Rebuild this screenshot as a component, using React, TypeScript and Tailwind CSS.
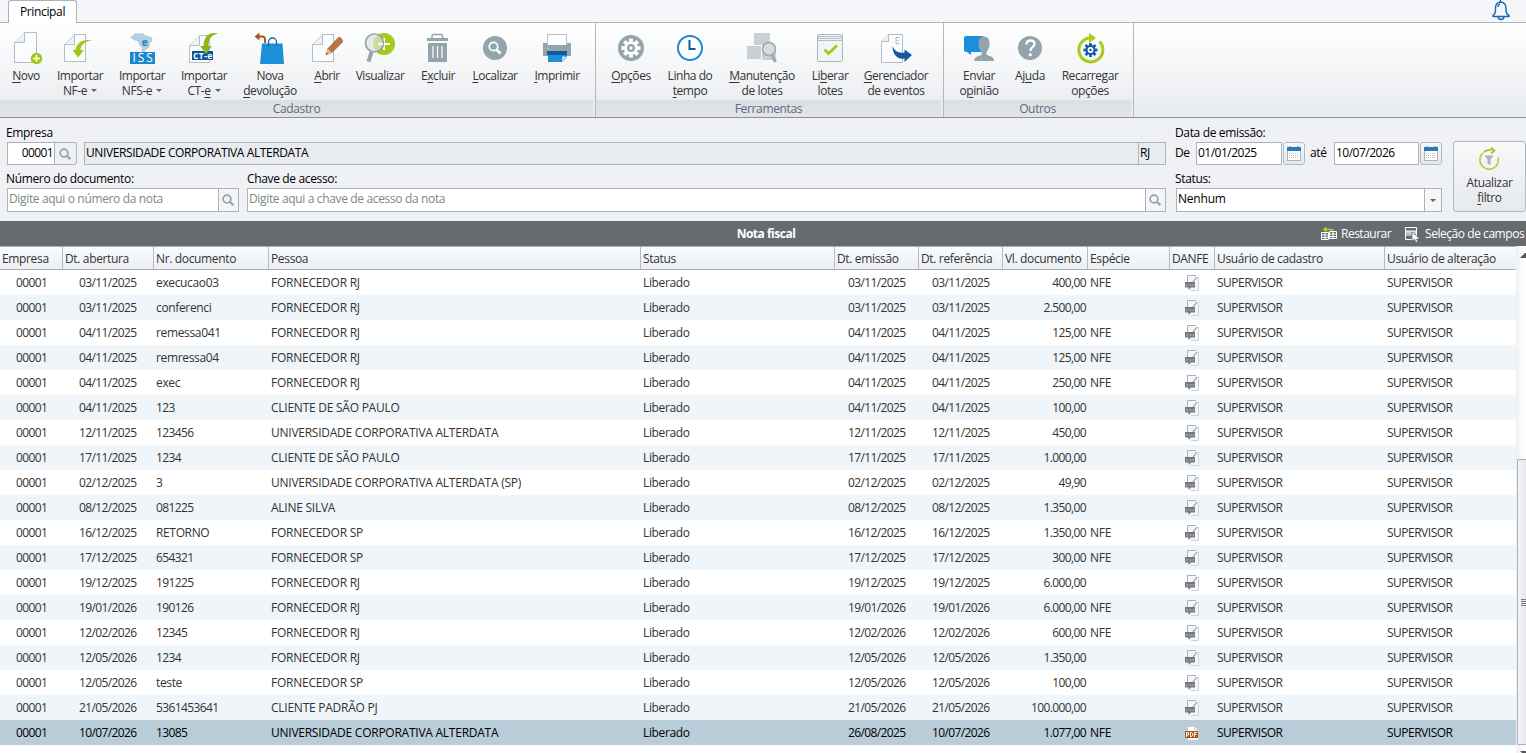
import React from 'react';

interface RibbonButtonProps {
  label: React.ReactNode;
  second?: React.ReactNode;
  menu?: boolean;
  width: string;
  viewBox: string;
  children: React.ReactNode;
}

interface Nota {
  abertura: string;
  numero: string;
  pessoa: string;
  emissao: string;
  referencia: string;
  valor: string;
  especie?: string;
}

const nota = (
  abertura: string,
  numero: string,
  pessoa: string,
  valor: string,
  especie?: string,
  emissao: string = abertura,
): Nota => ({ abertura, numero, pessoa, valor, especie, emissao, referencia: abertura });

const NOTAS: Nota[] = [
  nota('03/11/2025', 'execucao03', 'FORNECEDOR RJ', '400,00', 'NFE'),
  nota('03/11/2025', 'conferenci', 'FORNECEDOR RJ', '2.500,00'),
  nota('04/11/2025', 'remessa041', 'FORNECEDOR RJ', '125,00', 'NFE'),
  nota('04/11/2025', 'remressa04', 'FORNECEDOR RJ', '125,00', 'NFE'),
  nota('04/11/2025', 'exec', 'FORNECEDOR RJ', '250,00', 'NFE'),
  nota('04/11/2025', '123', 'CLIENTE DE SÃO PAULO', '100,00'),
  nota('12/11/2025', '123456', 'UNIVERSIDADE CORPORATIVA ALTERDATA', '450,00'),
  nota('17/11/2025', '1234', 'CLIENTE DE SÃO PAULO', '1.000,00'),
  nota('02/12/2025', '3', 'UNIVERSIDADE CORPORATIVA ALTERDATA (SP)', '49,90'),
  nota('08/12/2025', '081225', 'ALINE SILVA', '1.350,00'),
  nota('16/12/2025', 'RETORNO', 'FORNECEDOR SP', '1.350,00', 'NFE'),
  nota('17/12/2025', '654321', 'FORNECEDOR SP', '300,00', 'NFE'),
  nota('19/12/2025', '191225', 'FORNECEDOR RJ', '6.000,00'),
  nota('19/01/2026', '190126', 'FORNECEDOR RJ', '6.000,00', 'NFE'),
  nota('12/02/2026', '12345', 'FORNECEDOR RJ', '600,00', 'NFE'),
  nota('12/05/2026', '1234', 'FORNECEDOR RJ', '1.350,00'),
  nota('12/05/2026', 'teste', 'FORNECEDOR SP', '100,00'),
  nota('21/05/2026', '5361453641', 'CLIENTE PADRÃO PJ', '100.000,00'),
  nota('10/07/2026', '13085', 'UNIVERSIDADE CORPORATIVA ALTERDATA', '1.077,00', 'NFE', '26/08/2025'),
];

const COLUMNS = [
  'Empresa', 'Dt. abertura', 'Nr. documento', 'Pessoa', 'Status', 'Dt. emissão',
  'Dt. referência', 'Vl. documento', 'Espécie', 'DANFE', 'Usuário de cadastro', 'Usuário de alteração',
];

const GRID = 'grid grid-cols-[63px_91px_115px_372px_194px_84px_84px_85px_82px_45px_170px_131px]';
const DIGITS = 'tracking-[-0.62px]';
const CAPS = 'tracking-[-0.25px]';

function RibbonButton({ label, second, menu, width, viewBox, children }: RibbonButtonProps) {
  return (
    <button className={`flex shrink-0 flex-col items-center pt-[7px] ${width}`}>
      <svg viewBox={viewBox} className="h-9 w-9 shrink-0 overflow-visible">{children}</svg>
      <span className="mt-[2px] whitespace-nowrap leading-[15px] tracking-[-0.45px]">{label}</span>
      {second && (
        <span className="flex items-center gap-1 whitespace-nowrap leading-[15px] tracking-[-0.4px]">
          {second}
          {menu && <span className="h-0 w-0 border-x-[3px] border-t-[3px] border-x-transparent border-t-[#666]" />}
        </span>
      )}
    </button>
  );
}

function RibbonGroup({ title, width, padding, children }: { title: string; width: string; padding: string; children: React.ReactNode }) {
  return (
    <div className={`flex h-[94px] shrink-0 flex-col border-r border-[#b3b8bd] ${width}`}>
      <div className={`flex h-[77px] ${padding}`}>{children}</div>
      <div className="mr-[2px] h-[17px] bg-gradient-to-b from-[#dbdfe3] to-[#e2e4e8] text-center leading-[18px] text-[#63697a]">{title}</div>
    </div>
  );
}

function Page({ x, y, w, h, fold = 10 }: { x: number; y: number; w: number; h: number; fold?: number }) {
  return (
    <g fill="#fbfcfd" stroke="#b4bdc5" strokeWidth="1">
      <path d={`M${x + fold} ${y}H${x + w}V${y + h}H${x}V${y + fold}Z`} />
      <path d={`M${x + fold} ${y}V${y + fold}H${x}`} fill="#eef1f4" />
    </g>
  );
}

const GEAR_TEETH = [0, 45, 90, 135, 180, 225, 270, 315];

function Gear({ cx, cy, r, color, hole }: { cx: number; cy: number; r: number; color: string; hole: string }) {
  return (
    <g fill={color}>
      {GEAR_TEETH.map(a => (
        <rect key={a} x={cx - r * 0.2} y={cy - r} width={r * 0.4} height={r * 0.5} transform={`rotate(${a} ${cx} ${cy})`} />
      ))}
      <circle cx={cx} cy={cy} r={r * 0.72} />
      <circle cx={cx} cy={cy} r={r * 0.42} fill={hole} />
      <circle cx={cx} cy={cy} r={r * 0.18} />
    </g>
  );
}

function SearchIcon() {
  return (
    <svg viewBox="0 0 12 12" className="mr-px h-3 w-3" fill="none" stroke="#94a3ab">
      <circle cx="5" cy="5" r="3.9" strokeWidth="1.7" />
      <path d="M8 8l3.4 3.2" strokeWidth="2.2" />
    </svg>
  );
}

function CalendarButton() {
  return (
    <button className="ml-px flex h-[23px] w-[22px] shrink-0 items-center justify-center rounded-[3px] border border-[#b1bac3] bg-gradient-to-b from-[#f7f8fa] to-[#e4e8ec]">
      <svg viewBox="0 0 14 15" className="mr-px h-[15px] w-[14px]">
        <rect x=".5" y="1.5" width="13" height="13" fill="#fff" stroke="#a9b3bb" />
        <path d="M0 1h14v4H0z" fill="#2b79bd" />
        <path d="M3 0v2M11 0v2" stroke="#2b79bd" />
        <path d="M2 7.5h10M2 9.5h10M2 11.5h10" stroke="#b5bcc2" strokeDasharray="1 1" />
      </svg>
    </button>
  );
}

function DanfeIcon({ active }: { active: boolean }) {
  if (active) {
    return (
      <svg viewBox="0 0 15 16" className="h-4 w-[15px]">
        <path d="M2.500 1.500H10l3.500 3.500V15.500h-11z" fill="#fff" stroke="#c7ccd0" />
        <path d="M10 1.500V5h3.500" fill="none" stroke="#c7ccd0" />
        <rect x="0" y="6" width="13" height="7" fill="#a9531c" />
        <path
          d="M1.500 12V7.500h2v2.500h-2M5.500 7.500h1l1.200 1v2l-1.200 1h-1zM9.500 12V7.500h2.500M9.500 9.500h2"
          fill="none"
          stroke="#fff"
        />
      </svg>
    );
  }
  return (
    <svg viewBox="0 0 15 16" className="h-4 w-[15px]">
      <path d="M2.500 .5H11L13.500 1.500V15.500H6L2.500 12z" fill="#f6f7f8" />
      <path d="M2.500 7V.5H11" fill="none" stroke="#a9b1b8" />
      <path d="M13.500 1.500v14H6" fill="none" stroke="#ccd3d8" />
      <path d="M12 2L8 7" stroke="#8e9499" strokeWidth="1.200" />
      <path d="M0 7h10v5.500H6L3.500 15V12.500H0z" fill="#74787c" />
      <path d="M1.500 11.500v-2h1.500v1M4.500 9.500h1.500v1.500H4.500M8 11.500v-2h1.500" fill="none" stroke="#b9bcbf" strokeWidth=".7" />
    </svg>
  );
}

function Ribbon() {
  return (
    <div className="flex h-[95px] border-b border-[#8b9097] bg-gradient-to-b from-white to-[#e8ebef] text-[#333]">
      <RibbonGroup title="Cadastro" width="w-[596px]" padding="pl-0">
        <RibbonButton label={<><u>N</u>ovo</>} width="w-[52px]" viewBox="8 30 36 36">
          <Page x={14.500} y={32.500} w={22} h={30} />
          <circle cx="36.500" cy="58.500" r="5.700" fill="#a2c614" />
          <path d="M36.500 55v7M33 58.500h7" stroke="#fff" strokeWidth="1.500" />
        </RibbonButton>
        <RibbonButton label="Importar" second="NF-e" menu width="w-[56px]" viewBox="62 30 36 36">
          <Page x={64.500} y={34.500} w={21} h={27} />
          <path d="M92.500 40.500C84 38.500 76.500 42 75.500 50H72.500L78 57.500L84 50H80.500C81 44.500 85 41 92.500 40.500Z" fill="#a2c614" />
        </RibbonButton>
        <RibbonButton label="Importar" second="NFS-e" menu width="w-[68px]" viewBox="124 30 36 36">
          <path d="M131 37l3-1.500 1-2 4 .5 4-.5 1 2 4 1 4 1.500-.5 3-2 2-.5 4-3 2-2 3-2.500-1.500 1-2.500-3-3-1-4-4-1-3-2z" fill="#b4d0de" stroke="#8fb4c7" strokeWidth=".5" />
          <text x="144.500" y="45.500" textAnchor="middle" fontSize="11" fontWeight="700" fill="#1c86cf">e</text>
          <rect x="130" y="52" width="25" height="12" fill="#1c86cf" />
          <text x="142.500" y="62.200" textAnchor="middle" fontSize="12" fill="#fff" textLength="20">ISS</text>
        </RibbonButton>
        <RibbonButton label="Importar" second={<span>CT-<u>e</u></span>} menu width="w-[56px]" viewBox="186 30 36 36">
          <Page x={189.500} y={35.500} w={20} h={27} />
          <rect x="192" y="51" width="21" height="9" fill="#0d569b" />
          <path d="M218 33.500C209 31.500 204 36 203.500 46H200L206 54L212 46H208.500C208.500 39 211 35 218 33.500Z" fill="#8fb51c" />
          <text x="202.500" y="58.500" textAnchor="middle" fontSize="8.500" fontWeight="700" fill="#fff" textLength="19">CT-e</text>
        </RibbonButton>
        <RibbonButton label="Nova" second={<span><u>d</u>evolução</span>} width="w-[76px]" viewBox="252 30 36 36">
          <path d="M265 43v-4q0-2.500-3-2.500h-4" fill="none" stroke="#a3592a" strokeWidth="2" />
          <path d="M259.500 32.500v8L254.500 36.500z" fill="#a3592a" />
          <path d="M262 43.500h20.500L284 64h-24z" fill="#1c8fd9" />
          <path d="M268.500 46v-4a4 4 0 0 1 8 0v4" fill="none" stroke="#1768ad" strokeWidth="1.300" />
        </RibbonButton>
        <RibbonButton label={<><u>A</u>brir</>} width="w-[38px]" viewBox="309 30 36 36">
          <Page x={312.500} y={34.500} w={21} h={27} />
          <path d="M326 54.500l1.500-6L338 37.500l5 4.500L332 53z" fill="#b87445" />
          <path d="M338 37.500l2-.5 3 3.500v1.500z" fill="#8f5430" />
          <path d="M326 54.500l1.500-6 4.500 4.500z" fill="#dfbd99" />
          <path d="M325.500 55l1-2.500 1.500 1.500z" fill="#6b4026" />
        </RibbonButton>
        <RibbonButton label="Visualizar" width="w-[68px]" viewBox="362 30 36 36">
          <circle cx="384" cy="44" r="11" fill="#a6c91a" />
          <path d="M384 38v12M378 44h12" stroke="#fff" strokeWidth="2" />
          <circle cx="374.500" cy="43" r="9" fill="#dfe4d8" fillOpacity=".7" stroke="#93a4ad" strokeWidth="1.700" />
          <path d="M378 44h5" stroke="#fff" strokeWidth="1.500" />
          <path d="M371.500 52l-3 9.500" stroke="#93a4ad" strokeWidth="4" />
        </RibbonButton>
        <RibbonButton label={<>E<u>x</u>cluir</>} width="w-[48px]" viewBox="420 30 36 36">
          <path d="M432 38v-2q0-1.500 1.500-1.500h7.500q1.500 0 1.500 1.500v2" fill="none" stroke="#93a4ad" strokeWidth="1.500" />
          <path d="M427 38h21v3h-21zM428 43h19v19h-19z" fill="#93a4ad" />
          <path d="M433 46v12M437.500 46v12M442 46v12" stroke="#fff" strokeWidth="1.200" />
        </RibbonButton>
        <RibbonButton label={<><u>L</u>ocalizar</>} width="w-[66px]" viewBox="477 30 36 36">
          <circle cx="495" cy="48" r="12" fill="#93a4ad" />
          <circle cx="493.500" cy="46.500" r="4.200" fill="none" stroke="#fff" strokeWidth="1.800" />
          <path d="M496.500 49.500l4 4" stroke="#fff" strokeWidth="2.500" />
        </RibbonButton>
        <RibbonButton label={<><u>I</u>mprimir</>} width="w-[58px]" viewBox="539 30 36 36">
          <rect x="547.500" y="34.500" width="19" height="11" fill="#fff" stroke="#bac2c8" />
          <path d="M543 43h4v2h20v-2h4v13h-28z" fill="#93a4ad" />
          <rect x="547" y="51" width="20" height="4" fill="#0f5ca3" />
          <path d="M548 55h19v2l-5 5h-14z" fill="#1c8fd9" />
          <path d="M562 61.500v-5h5z" fill="#c6e2f6" />
          <rect x="547" y="48" width="2" height="1" fill="#c3db2e" />
        </RibbonButton>
      </RibbonGroup>
      <RibbonGroup title="Ferramentas" width="w-[348px]" padding="pl-[14px]">
        <RibbonButton label={<><u>O</u>pções</>} width="w-[42px]" viewBox="613 30 36 36">
          <circle cx="631" cy="48" r="13" fill="#93a4ad" />
          <Gear cx={631} cy={48} r={9.500} color="#fff" hole="#93a4ad" />
        </RibbonButton>
        <RibbonButton label="Linha do" second={<span><u>t</u>empo</span>} width="w-[76px]" viewBox="672 30 36 36">
          <circle cx="690" cy="48" r="12" fill="#fff" stroke="#1b8bd3" strokeWidth="2" />
          <path d="M689.500 40v9h6" fill="none" stroke="#105a9e" strokeWidth="2" />
        </RibbonButton>
        <RibbonButton label={<><u>M</u>anutenção</>} second="de lotes" width="w-[68px]" viewBox="744 30 36 36">
          <path d="M754 33h16v12h-16zM747 46h14v13h-14zM762 46h14v14h-14z" fill="#c9d0d5" />
          <circle cx="769" cy="49" r="6.500" fill="#d7dcdf" stroke="#9aa8b0" strokeWidth="1.500" />
          <path d="M772 55l3.500 7" stroke="#9aa8b0" strokeWidth="3" />
        </RibbonButton>
        <RibbonButton label={<>Li<u>b</u>erar</>} second="lotes" width="w-[68px]" viewBox="812 30 36 36">
          <rect x="817.500" y="34.500" width="25" height="27" rx="1.500" fill="#f2f4f6" stroke="#abb6bd" />
          <path d="M818 36.500h24M818 38.500h24M818 40.500h24" stroke="#b5bfc6" />
          <path d="M824.500 49.500l4 4 8.500-8" fill="none" stroke="#a6c91a" strokeWidth="3" />
        </RibbonButton>
        <RibbonButton label={<><u>G</u>erenciador</>} second="de eventos" width="w-[64px]" viewBox="878 30 36 36">
          <Page x={881.500} y={34.500} w={21} h={28} fold={7} />
          <text x="897" y="44" textAnchor="middle" fontSize="9" fill="#a4b0b8">E</text>
          <path d="M892.500 46C894 51 899 53.500 904.500 52.500V49.500L912 55L904.500 62V58.500C897 60 892.500 54 892.500 46Z" fill="#155a9f" />
        </RibbonButton>
      </RibbonGroup>
      <RibbonGroup title="Outros" width="w-[190px]" padding="pl-[15px]">
        <RibbonButton label="Enviar" second={<span>o<u>p</u>inião</span>} width="w-[40px]" viewBox="961 30 36 36">
          <path d="M966 36h16q2 0 2 2v14h-13v3l-4-3h-1q-2 0-2-2V38q0-2 2-2z" fill="#1b90da" />
          <path d="M978.500 43q0-6.500 5.500-6.500t5.500 6.500q0 6-3 9v3q8 1.500 7.500 6h-20q0-4.500 7.500-6v-3q-3-3-3-9z" fill="#93a4ad" />
        </RibbonButton>
        <RibbonButton label={<>Aj<u>u</u>da</>} width="w-[62px]" viewBox="1012 30 36 36">
          <circle cx="1030" cy="48" r="12" fill="#93a4ad" />
          <path d="M1026.500 44.500q0-4 4-4t4 3.500q0 2-2.300 3.500-1.700 1-1.700 3.500" fill="none" stroke="#fff" strokeWidth="2.300" />
          <circle cx="1030.300" cy="54.700" r="1.600" fill="#fff" />
        </RibbonButton>
        <RibbonButton label="Recarregar" second="opções" width="w-[58px]" viewBox="1072 30 36 36">
          <path d="M1099.500 41.500A12 12 0 1 1 1089 38" fill="none" stroke="#a9cb1c" strokeWidth="3" />
          <path d="M1089 33l7 5-7 5z" fill="#a9cb1c" />
          <Gear cx={1090.500} cy={50} r={7} color="#155a9f" hole="#fff" />
        </RibbonButton>
      </RibbonGroup>
    </div>
  );
}

function Filters() {
  const field = 'flex h-[23px] border border-[#abb4bd] px-[1px] leading-[19px]';
  return (
    <div className="flex h-[103px] bg-[#f0f1f5] pl-[6px] pt-[6px] text-black">
      <div className="w-[1160px] shrink-0">
        <div className="h-[18px] leading-[18px]">Empresa</div>
        <div className="flex pl-px">
          <div className={`${field} ${DIGITS} w-[48px] justify-end bg-white`}>00001</div>
          <button className="flex h-[23px] w-[22px] items-center justify-center rounded-r-[3px] border border-l-0 border-[#abb4bd] bg-[#eef0f4]"><SearchIcon /></button>
          <div className={`${field} w-[1055px] ml-[7px] bg-[#e8ebf0] tracking-[-0.4px]`}>UNIVERSIDADE CORPORATIVA ALTERDATA</div>
          <div className={`${field} w-[27px] border-l-0 bg-[#e8ebf0]`}>RJ</div>
        </div>
        <div className="flex h-[23px] leading-[28px]">
          <span className="w-[241px]">Número do documento:</span>
          <span>Chave de acesso:</span>
        </div>
        <div className="flex pl-px text-[#7d8a7d]">
          <div className="flex h-6 w-[212px] border border-[#abb4bd] bg-white px-px leading-[20px]">Digite aqui o número da nota</div>
          <button className="flex h-6 w-5 items-center justify-center border border-l-0 border-[#abb4bd] bg-[#f4f5f8]"><SearchIcon /></button>
          <div className="ml-2 flex h-6 w-[899px] border border-[#abb4bd] bg-white px-px leading-[20px]">Digite aqui a chave de acesso da nota</div>
          <button className="flex h-6 w-5 items-center justify-center border border-l-0 border-[#abb4bd] bg-[#f4f5f8]"><SearchIcon /></button>
        </div>
      </div>
      <div className="ml-[9px] w-[267px] shrink-0">
        <div className="h-[18px] leading-[18px]">Data de emissão:</div>
        <div className="flex leading-[21px]">
          <span className="w-[21px]">De</span>
          <div className={`${field} w-[86px] bg-white tracking-[-0.5px]`}>01/01/2025</div>
          <CalendarButton />
          <span className="w-[29px] pl-[5px]">até</span>
          <div className={`${field} w-[85px] bg-white tracking-[-0.5px]`}>10/07/2026</div>
          <CalendarButton />
        </div>
        <div className="h-[23px] leading-[28px]">Status:</div>
        <div className="ml-px flex h-6 w-[266px] border border-[#abb4bd] bg-white">
          <span className="flex-1 px-px leading-[20px] tracking-[-0.2px]">Nenhum</span>
          <button className="flex w-[17px] items-center justify-center border-l border-[#abb4bd] bg-[#f6f7f9]">
            <span className="h-0 w-0 border-x-[3px] border-t-[3px] border-x-transparent border-t-[#666]" />
          </button>
        </div>
      </div>
      <button className="ml-[11px] mt-[17px] flex h-[71px] w-[73px] shrink-0 flex-col items-center rounded-[3px] border border-[#b1bac3] bg-gradient-to-b from-[#f8f9fb] to-[#e6e9ed] pt-[5px] text-[#333]">
        <svg viewBox="0 0 24 24" className="mr-px h-6 w-6" fill="none">
          <path d="M6.500 5.500A9.300 9.300 0 1 0 21 10" stroke="#b5cc2e" strokeWidth="1.500" />
          <path d="M7 5q3-2.500 8-2M14 .5l3.500 3L14 6.500" stroke="#a9c51c" strokeWidth="1.700" />
          <path d="M7.500 8.500h9l-3 4V18l-3-1.500v-4z" fill="#a9b3bb" />
        </svg>
        <span className="mt-[4px] leading-[15px]">Atualizar</span>
        <span className="leading-[15px]"><u>f</u>iltro</span>
      </button>
    </div>
  );
}

function TitleBar() {
  return (
    <div className="grid h-[25px] grid-cols-[660px_212px_654px] items-center bg-[#666b6f] text-white">
      <span />
      <span className="text-center font-bold tracking-[-0.5px]">Nota fiscal</span>
      <div className="flex items-center justify-end whitespace-nowrap leading-[23px]">
        <svg viewBox="0 0 16 14" className="mr-1 h-[14px] w-4" fill="none" stroke="#fff">
          <path d="M.5 5.500h7v7h-7zM.5 8h7M.5 10.500h7M4 5.500v7M8.500 4.500h7v7h-7zM8.500 7h7M8.500 9.500h7M12 4.500v7" />
          <path d="M3 2.500h7q2 0 2 1.500M5.500.5L3 2.500 5.500 4.500" stroke="#b7d124" strokeWidth="1.500" />
        </svg>
        <span className="w-[49px] tracking-[-0.5px]">Restaurar</span>
        <svg viewBox="0 0 16 16" className="ml-[15px] mr-1 h-4 w-4" fill="none" stroke="#fff">
          <path d="M.5 1.500h11v12H.5z" />
          <path d="M1 5h10v3H1z" fill="#c6c9cb" stroke="none" />
          <path d="M.5 5h11M.5 9h11" />
          <path d="M7 6l8 7h-3.500l1.500 3-2 .5-1.500-3.500L7 15z" fill="#fff" stroke="#666b6f" strokeWidth=".7" />
        </svg>
        <span className="w-[101px] tracking-[-0.45px]">Seleção de campos</span>
      </div>
    </div>
  );
}

function NotasTable() {
  return (
    <div className="flex h-[507px] bg-white">
      <div className="w-[1516px]">
        <div className={`${GRID} h-6 border-b border-t border-[#a7afb8] bg-gradient-to-b from-[#fafbfc] to-[#eceff3] text-[#333]`}>
          {COLUMNS.map((name, i) => (
            <span key={name} className={`overflow-hidden whitespace-nowrap border-[#b5bcc4] pl-[2px] leading-[24px] ${i < COLUMNS.length - 1 ? 'border-r' : ''}`}>
              {name}
            </span>
          ))}
        </div>
        {NOTAS.map((row, i) => {
          const selected = i === NOTAS.length - 1;
          return (
            <div
              key={i}
              className={`${GRID} h-[25px] whitespace-nowrap leading-[25px] ${
                selected ? 'bg-[#b8cdd8] text-black' : i % 2 ? 'bg-[#eff5f9] text-[#333]' : 'bg-white text-[#333]'
              }`}
            >
              <span className={`${DIGITS} pl-4`}>00001</span>
              <span className={`${DIGITS} pl-4`}>{row.abertura}</span>
              <span className={`pl-[2px] ${/^\d/.test(row.numero) ? DIGITS : ''}`}>{row.numero}</span>
              <span className={`${CAPS} pl-[2px]`}>{row.pessoa}</span>
              <span className="pl-[2px]">Liberado</span>
              <span className={`${DIGITS} pl-[13px]`}>{row.emissao}</span>
              <span className={`${DIGITS} pl-[13px]`}>{row.referencia}</span>
              <span className={`${DIGITS} pr-[2px] text-right`}>{row.valor}</span>
              <span className={`${CAPS} pl-[2px]`}>{row.especie}</span>
              <span className="flex items-center pl-[15px]"><DanfeIcon active={selected} /></span>
              <span className="pl-[2px] tracking-[-0.5px]">SUPERVISOR</span>
              <span className="pl-[2px] tracking-[-0.5px]">SUPERVISOR</span>
            </div>
          );
        })}
      </div>
      <div className="flex w-[10px] flex-col overflow-hidden bg-gradient-to-r from-[#f0f1f3] to-white">
        <div className="flex h-[213px] shrink-0 items-start justify-end pt-[7px]">
          <svg viewBox="0 0 6 5" className="h-[5px] w-[6px]"><path d="M0 5L5 0H6V5z" fill="#555" /></svg>
        </div>
        <div className="ml-px flex h-[286px] shrink-0 flex-col items-end justify-center gap-px rounded-l-[2px] border border-r-0 border-[#a9afb8] bg-gradient-to-r from-[#f4f5f7] to-[#e6e8eb]">
          <span className="h-px w-[5px] bg-[#777]" />
          <span className="h-px w-[5px] bg-[#777]" />
          <span className="h-px w-[5px] bg-[#777]" />
          <span className="h-px w-[5px] bg-[#777]" />
        </div>
        <div className="flex justify-end pt-[6px]">
          <svg viewBox="0 0 6 3" className="h-[3px] w-[6px]"><path d="M0 0H6V3H3z" fill="#555" /></svg>
        </div>
      </div>
    </div>
  );
}

export default function App() {
  return (
    <div className="h-[753px] w-[1526px] overflow-hidden bg-[#f0f1f5] text-[12px] tracking-[-0.35px] font-['Open_Sans','Noto_Sans',sans-serif] [font-stretch:88%] [text-underline-offset:2px]">
      <div className="flex h-[23px] bg-[#f4f6f9]">
        <div className="w-2 border-b border-[#aab2ba]" />
        <div className="w-[69px] rounded-t-[3px] border-x border-t border-[#aab2ba] bg-white text-center leading-[22px] text-black">Principal</div>
        <div className="flex flex-1 justify-end border-b border-[#aab2ba] pr-[15px]">
          <svg viewBox="0 0 20 22" className="h-[22px] w-5 overflow-visible" fill="none" stroke="#1668b3" strokeWidth="1.400">
            <path d="M2 15.500q2.500-1.500 2.500-5V8q0-5.500 5-6 5.500.5 5.500 6v2.500q0 3.500 3 5v1H2z" />
            <path d="M7 17q.5 2.500 3 2.500t3-2.500M9.500 2V0M7 7q0-2.500 2-3" />
          </svg>
        </div>
      </div>
      <Ribbon />
      <Filters />
      <TitleBar />
      <NotasTable />
    </div>
  );
}
